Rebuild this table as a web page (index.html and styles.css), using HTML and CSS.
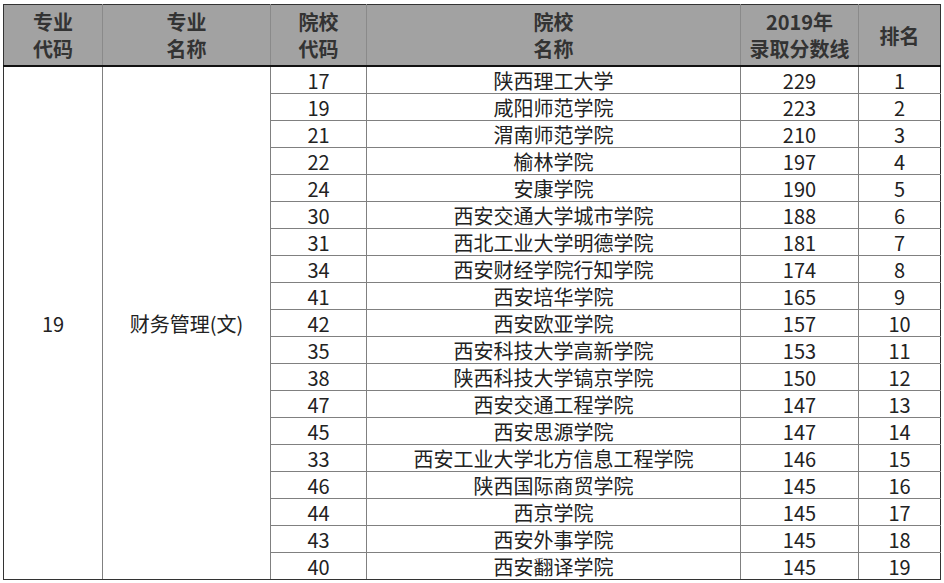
FILE: index.html
```html
<!DOCTYPE html>
<html lang="zh">
<head>
<meta charset="utf-8">
<link rel="stylesheet" href="styles.css">
</head>
<body>
<table class="score">
  <colgroup>
    <col class="c1"><col class="c2"><col class="c3"><col class="c4"><col class="c5"><col class="c6">
  </colgroup>
  <thead>
    <tr>
      <th>专业<br>代码</th>
      <th>专业<br>名称</th>
      <th>院校<br>代码</th>
      <th>院校<br>名称</th>
      <th>2019年<br>录取分数线</th>
      <th>排名</th>
    </tr>
  </thead>
  <tbody>
    <tr><td rowspan="19">19</td><td rowspan="19">财务管理(文)</td><td>17</td><td>陕西理工大学</td><td>229</td><td>1</td></tr>
    <tr><td>19</td><td>咸阳师范学院</td><td>223</td><td>2</td></tr>
    <tr><td>21</td><td>渭南师范学院</td><td>210</td><td>3</td></tr>
    <tr><td>22</td><td>榆林学院</td><td>197</td><td>4</td></tr>
    <tr><td>24</td><td>安康学院</td><td>190</td><td>5</td></tr>
    <tr><td>30</td><td>西安交通大学城市学院</td><td>188</td><td>6</td></tr>
    <tr><td>31</td><td>西北工业大学明德学院</td><td>181</td><td>7</td></tr>
    <tr><td>34</td><td>西安财经学院行知学院</td><td>174</td><td>8</td></tr>
    <tr><td>41</td><td>西安培华学院</td><td>165</td><td>9</td></tr>
    <tr><td>42</td><td>西安欧亚学院</td><td>157</td><td>10</td></tr>
    <tr><td>35</td><td>西安科技大学高新学院</td><td>153</td><td>11</td></tr>
    <tr><td>38</td><td>陕西科技大学镐京学院</td><td>150</td><td>12</td></tr>
    <tr><td>47</td><td>西安交通工程学院</td><td>147</td><td>13</td></tr>
    <tr><td>45</td><td>西安思源学院</td><td>147</td><td>14</td></tr>
    <tr><td>33</td><td>西安工业大学北方信息工程学院</td><td>146</td><td>15</td></tr>
    <tr><td>46</td><td>陕西国际商贸学院</td><td>145</td><td>16</td></tr>
    <tr><td>44</td><td>西京学院</td><td>145</td><td>17</td></tr>
    <tr><td>43</td><td>西安外事学院</td><td>145</td><td>18</td></tr>
    <tr><td>40</td><td>西安翻译学院</td><td>145</td><td>19</td></tr>
  </tbody>
</table>
</body>
</html>
```

FILE: styles.css
```css
html, body {
  margin: 0;
  padding: 0;
  background: #ffffff;
}

body {
  padding: 4px 0 0 3px;
  font-family: "Noto Sans CJK SC", "Noto Sans", sans-serif;
}

.score {
  border-collapse: collapse;
  table-layout: fixed;
  width: 937px;
  border: 1px solid #333333;
  color: #222222;
  font-size: 20px;
}

.c1 { width: 99px; }
.c2 { width: 168px; }
.c3 { width: 96px; }
.c4 { width: 374px; }
.c5 { width: 118px; }
.c6 { width: 82px; }

.score th {
  background: #a2a2a2;
  color: #333333;
  font-weight: bold;
  line-height: 27px;
  height: 60px;
  padding: 0;
  text-align: center;
  vertical-align: middle;
  border-left: 1px solid #8a8a8a;
  border-right: 1px solid #8a8a8a;
  border-top: 1px solid #333333;
  border-bottom: 2px solid #111111;
}

.score td {
  height: 25px;
  line-height: 25px;
  padding: 1px 0 0;
  text-align: center;
  vertical-align: middle;
  border: 1px solid #808080;
}

.score td[rowspan] {
  border-bottom: 1px solid #333333;
}

.score tbody tr:last-child td {
  border-bottom: 1px solid #333333;
}

.score tr > :first-child {
  border-left: 1px solid #333333;
}

.score tr > :last-child {
  border-right: 1px solid #333333;
}
```
